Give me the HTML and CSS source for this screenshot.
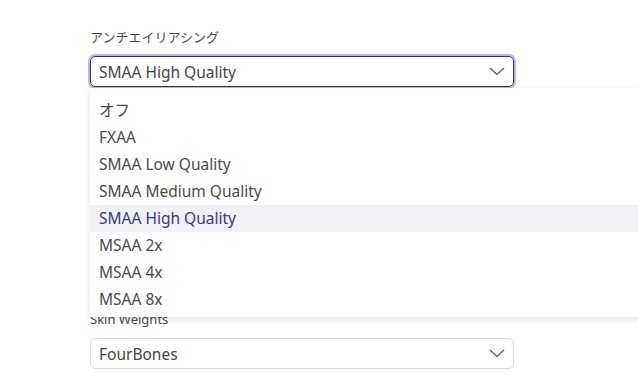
FILE: index.html
```html
<!DOCTYPE html>
<html lang="ja">
<head>
    <meta charset="UTF-8">
    <meta name="viewport" content="width=device-width, initial-scale=1.0">
    <title>Render Settings</title>
    <link rel="stylesheet" href="styles.css">
</head>
<body>

    <div class="settings">
        <div class="field first">
            <label class="label">アンチエイリアシング</label>
            <div class="select focused">
                <span class="value">SMAA High Quality</span>
                <svg class="chevron" width="16" height="9" viewBox="0 0 16 9"><path d="M1.5 1.5 L8 7.5 L14.5 1.5" fill="none" stroke="#6a6a6a" stroke-width="1.6" stroke-linecap="round" stroke-linejoin="round"/></svg>
            </div>
            <ul class="menu">
                <li>オフ</li>
                <li>FXAA</li>
                <li>SMAA Low Quality</li>
                <li>SMAA Medium Quality</li>
                <li class="active">SMAA High Quality</li>
                <li>MSAA 2x</li>
                <li>MSAA 4x</li>
                <li>MSAA 8x</li>
            </ul>
        </div>

        <div class="field">
            <label class="label">Skin Weights</label>
            <div class="select">
                <span class="value">FourBones</span>
                <svg class="chevron" width="16" height="9" viewBox="0 0 16 9"><path d="M1.5 1.5 L8 7.5 L14.5 1.5" fill="none" stroke="#6a6a6a" stroke-width="1.6" stroke-linecap="round" stroke-linejoin="round"/></svg>
            </div>
        </div>
    </div>

</body>
</html>
```

FILE: styles.css
```css
body {
    margin: 0;
    background: #fff;
    font-family: "Noto Sans", "Noto Sans CJK JP", sans-serif;
    color: #4a4a4a;
    overflow: hidden;
}
.settings {
    padding: 28px 0 0 90px;
    width: 424px;
}
.field {
    position: relative;
    display: flex;
    flex-direction: column;
}
.field.first {
    margin-bottom: 223px;
}
.label {
    font-size: 13px;
    line-height: 18px;
    color: #4a4a4a;
    margin-bottom: 10px;
}
.select {
    height: 29px;
    border: 1px solid #dcdcdc;
    border-radius: 5px;
    display: flex;
    align-items: center;
    justify-content: space-between;
    padding: 0 8px 0 8px;
}
.select.focused {
    border-color: #34325e;
    box-shadow: 0 0 0 2px #b7b6e6;
}
.value {
    font-size: 15.5px;
    color: #444;
}
.menu {
    position: absolute;
    top: 60px;
    left: 0;
    width: 560px;
    margin: 0;
    padding: 9px 0 4px 0;
    list-style: none;
    background: #fff;
    box-shadow: 0 2px 6px rgba(0, 0, 0, 0.12);
    z-index: 2;
}
.menu li {
    height: 27px;
    line-height: 27px;
    padding-left: 9px;
    font-size: 15.5px;
    color: #4a4a4a;
}
.menu li.active {
    background: #f0f0f5;
    color: #3b3a78;
}
```
